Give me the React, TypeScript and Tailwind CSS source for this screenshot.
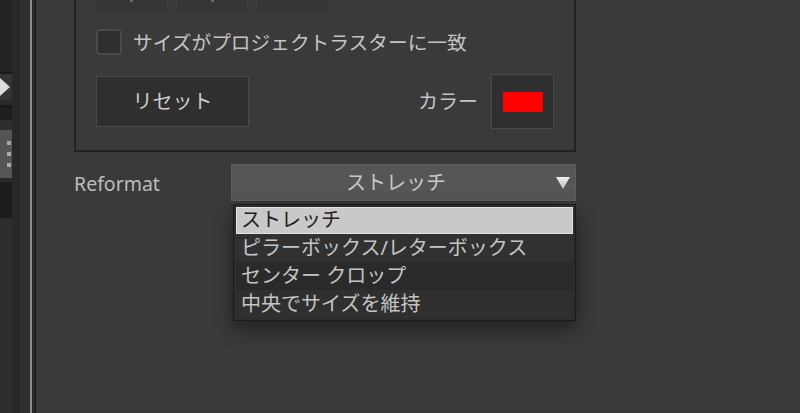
import React from "react";

const font = "font-['Noto_Sans','Noto_Sans_CJK_JP',sans-serif]";

function Sidebar() {
  return (
    <div className="flex h-full shrink-0">
      <div className="flex w-[12px] flex-col">
        <div className="h-[72px] bg-[#232323]" />
        <div className="h-[2px] bg-[#1a1a1a]" />
        <div className="flex h-[26px] items-center bg-[#343434]">
          <svg width="10" height="18" viewBox="0 0 10 18" className="block">
            <polygon points="0,0 10,9 0,18" fill="#dcdcdc" />
          </svg>
        </div>
        <div className="h-[5px] bg-[#2a2a2a]" />
        <div className="h-[3px] bg-[#1a1a1a]" />
        <div className="h-[12px] bg-[#1f1f1f]" />
        <div className="h-[10px] bg-[#2e2e2e]" />
        <div className="flex h-[48px] flex-col items-end justify-center gap-[7px] bg-[#555555] pr-[1px]">
          <div className="h-[4px] w-[4px] bg-[#a8a8a8]" />
          <div className="h-[4px] w-[4px] bg-[#a8a8a8]" />
          <div className="h-[4px] w-[4px] bg-[#a8a8a8]" />
        </div>
        <div className="h-[4px] bg-[#2a2a2a]" />
        <div className="h-[36px] bg-[#1c1c1c]" />
        <div className="flex-1 bg-[#2e2e2e]" />
      </div>
      <div className="w-[8px] bg-[#282828]" />
      <div className="w-[10px] bg-[#2f2f2f]" />
      <div className="w-[2px] bg-[#8c8c8c]" />
      <div className="w-[1px] bg-[#222222]" />
      <div className="w-[1px] bg-[#343434]" />
      <div className="w-[2px] bg-[#1c1c1c]" />
    </div>
  );
}

function Panel() {
  return (
    <div className="w-[502px] border-x-2 border-b-2 border-[#222222] px-[20px] pb-[21px]">
      <div className="-mt-[27px] flex gap-[12px]">
        <div className="relative h-[40px] w-[70px] bg-[#363636]">
          <div className="absolute bottom-[11px] left-[34px] h-[2px] w-[3px] bg-[#6a6a6a]" />
        </div>
        <div className="relative h-[40px] w-[68px] bg-[#363636]">
          <div className="absolute bottom-[11px] left-[33px] h-[2px] w-[3px] bg-[#6a6a6a]" />
        </div>
        <div className="h-[40px] w-[69px] bg-[#363636]" />
      </div>
      <div className="mt-[16px] flex h-[26px] items-center gap-[11px]">
        <div className="h-[26px] w-[26px] rounded-[4px] border-2 border-[#4a4a4a] bg-[#2f2f2f]" />
        <span className="pt-[2px] text-[19.7px] leading-none text-[#c4c4c4]">サイズがプロジェクトラスターに一致</span>
      </div>
      <div className="mt-[19px] flex h-[55px] items-center">
        <div className="flex h-[51px] w-[153px] items-center justify-center border border-[#4a4a4a] bg-[#2f2f2f] text-[20px] text-[#cccccc]">
          リセット
        </div>
        <div className="flex-1" />
        <span className="text-[20px] text-[#c4c4c4]">カラー</span>
        <div className="ml-[13px] flex h-[55px] w-[63px] items-center justify-center border border-[#4a4a4a] bg-[#2f2f2f]">
          <div className="h-[20px] w-[40px] bg-[#ff0000]" />
        </div>
      </div>
    </div>
  );
}

function Reformat() {
  const items = [
    { t: "ストレッチ", sel: true, bg: "" },
    { t: "ピラーボックス/レターボックス", sel: false, bg: "bg-[#313131]" },
    { t: "センター クロップ", sel: false, bg: "bg-[#2a2a2a]" },
    { t: "中央でサイズを維持", sel: false, bg: "bg-[#2f2f2f]" },
  ];
  return (
    <div className="mt-[12px] flex items-center">
      <div className="w-[157px] pt-[2px] text-[19.5px] leading-none text-[#bdbdbd]">Reformat</div>
      <div className="relative">
        <div className="flex h-[37px] w-[345px] items-center border border-dotted border-[#666666] bg-[#565656]">
          <div className="flex-1 pl-[4px] text-center text-[20px] leading-none text-[#c8c8c8]">ストレッチ</div>
          <svg width="14" height="12" viewBox="0 0 14 12" className="mr-[5px] block">
            <defs>
              <linearGradient id="ag" x1="0" y1="0" x2="0" y2="1">
                <stop offset="0" stopColor="#f0f0f0" />
                <stop offset="1" stopColor="#bdbdbd" />
              </linearGradient>
            </defs>
            <polygon points="0,0 14,0 7,12" fill="url(#ag)" />
          </svg>
        </div>
        <div className="absolute left-[2px] top-[40px] w-[343px] border border-[#1b1b1b] bg-[#2d2d2d] p-[2px] shadow-[0_8px_18px_rgba(0,0,0,0.45)]">
          {items.map((it) =>
            it.sel ? (
              <div
                key={it.t}
                className="flex h-[27px] items-center border border-[#e4e4e4] bg-[#c9c9c9] pb-[2px] pl-[4px] text-[20px] leading-none text-[#1f1f1f]"
              >
                {it.t}
              </div>
            ) : (
              <div key={it.t} className={`flex h-[28px] items-center pl-[5px] text-[20px] leading-none text-[#c4c4c4] ${it.bg}`}>
                {it.t}
              </div>
            )
          )}
        </div>
      </div>
    </div>
  );
}

export default function App() {
  return (
    <div className={`flex h-[413px] w-[800px] overflow-hidden bg-[#3a3a3a] ${font}`}>
      <Sidebar />
      <div className="flex-1 pl-[38px]">
        <Panel />
        <Reformat />
      </div>
    </div>
  );
}
